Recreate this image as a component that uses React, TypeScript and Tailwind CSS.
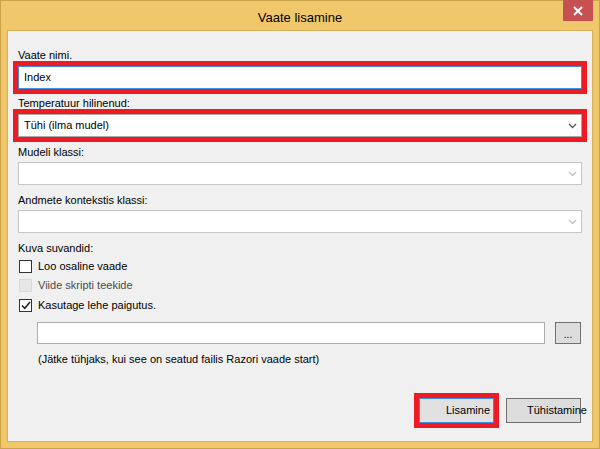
import React from "react";

const font = "font-['Liberation_Sans',Arial,sans-serif]";

function Chevron({ muted }: { muted?: boolean }) {
  return (
    <svg width="9" height="6" viewBox="0 0 9 6" className="shrink-0">
      <path d="M1 1 L4.5 4.5 L8 1" fill="none" stroke={muted ? "#c4c4c4" : "#5a5a5a"} strokeWidth="1.4" />
    </svg>
  );
}

function Label({ children, className = "" }: { children: React.ReactNode; className?: string }) {
  return <div className={`pl-[10px] text-[11px] leading-[12px] text-black ${className}`}>{children}</div>;
}

function Combo({ text, muted }: { text?: string; muted?: boolean }) {
  return (
    <div className={`flex h-[23px] items-center justify-between bg-white pl-[5px] pr-[4px] border ${muted ? "border-[#c6c6c6]" : "border-[#a9a9a9]"}`}>
      <span className="text-[11px] text-black">{text}</span>
      <Chevron muted={muted} />
    </div>
  );
}

function Check({ label, checked, disabled }: { label: string; checked?: boolean; disabled?: boolean }) {
  return (
    <div className="flex items-center gap-[6px] pl-[11px]">
      <div
        className={`flex h-[13px] w-[13px] items-center justify-center border ${
          disabled ? "border-[#d9d9d9] bg-[#e6e6e6]" : "border-[#333333] bg-white"
        }`}
      >
        {checked && (
          <svg width="10" height="9" viewBox="0 0 10 9">
            <path d="M1 4.5 L3.8 7.3 L9 1" fill="none" stroke="#222" strokeWidth="1.6" />
          </svg>
        )}
      </div>
      <span className={`text-[11px] leading-[13px] ${disabled ? "text-[#4a4a4a]" : "text-black"}`}>{label}</span>
    </div>
  );
}

export default function App() {
  return (
    <div className={`flex h-[449px] w-[600px] flex-col border border-[#c9a24a] bg-[#f0c86b] ${font}`}>
      {/* title bar */}
      <div className="relative flex h-[29px] shrink-0 items-center justify-center pt-[4px]">
        <span className="text-[13px] text-black">Vaate lisamine</span>
        <div className="absolute right-[6px] top-[-1px] flex h-[21px] w-[30px] items-center justify-center bg-[#c75050]">
          <svg width="10" height="10" viewBox="0 0 10 10">
            <path d="M1 1 L9 9 M9 1 L1 9" stroke="white" strokeWidth="2" />
          </svg>
        </div>
      </div>

      {/* client area */}
      <div className="mx-[6px] mb-[6px] flex flex-1 flex-col border border-[#d8b25a] bg-[#f0f0f0]">
        <Label className="mt-[18px]">Vaate nimi.</Label>
        <div className="mx-[5px] border-[5px] border-[#ed1c24]">
          <div className="flex h-[23px] items-center border border-[#3c8fe0] bg-white pl-[5px]">
            <span className="text-[11px] text-black">Index</span>
          </div>
        </div>

        <Label className="mt-[3px]">Temperatuur hilinenud:</Label>
        <div className="mx-[5px] border-[5px] border-[#ed1c24]">
          <Combo text="Tühi (ilma mudel)" />
        </div>

        <Label className="mt-[4px]">Mudeli klassi:</Label>
        <div className="mx-[10px] mt-[4px]">
          <Combo muted />
        </div>

        <Label className="mt-[9px]">Andmete kontekstis klassi:</Label>
        <div className="mx-[10px] mt-[4px]">
          <Combo muted />
        </div>

        <Label className="mt-[9px]">Kuva suvandid:</Label>
        <div className="mt-[6px] flex flex-col gap-[6px]">
          <Check label="Loo osaline vaade" />
          <Check label="Viide skripti teekide" disabled />
          <div className="mt-[1px]">
            <Check label="Kasutage lehe paigutus." checked />
          </div>
        </div>

        <div className="mt-[10px] flex items-center gap-[10px] pl-[29px]">
          <div className="h-[22px] w-[508px] border border-[#acacac] bg-white" />
          <div className="flex h-[22px] w-[26px] items-end justify-center border border-[#707070] bg-[#dddddd] pb-[5px] text-[10px] leading-[6px] text-black">
            ...
          </div>
        </div>
        <div className="mt-[9px] pl-[30px] text-[11px] leading-[12px] text-black">
          (Jätke tühjaks, kui see on seatud failis Razori vaade start)
        </div>

        <div className="mt-auto mb-[13px] flex items-center justify-end pr-[11px]">
          <div className="border-[5px] border-[#ed1c24]">
            <div className="flex h-[25px] w-[75px] items-center border border-[#3c8fe0] bg-[#e1e1e1] pl-[26px] text-[11px] text-black">
              Lisamine
            </div>
          </div>
          <div className="ml-[7px] flex h-[25px] w-[75px] items-center overflow-visible whitespace-nowrap border border-[#707070] bg-[#dddddd] pl-[20px] text-[11px] text-black">
            Tühistamine
          </div>
        </div>
      </div>
    </div>
  );
}
